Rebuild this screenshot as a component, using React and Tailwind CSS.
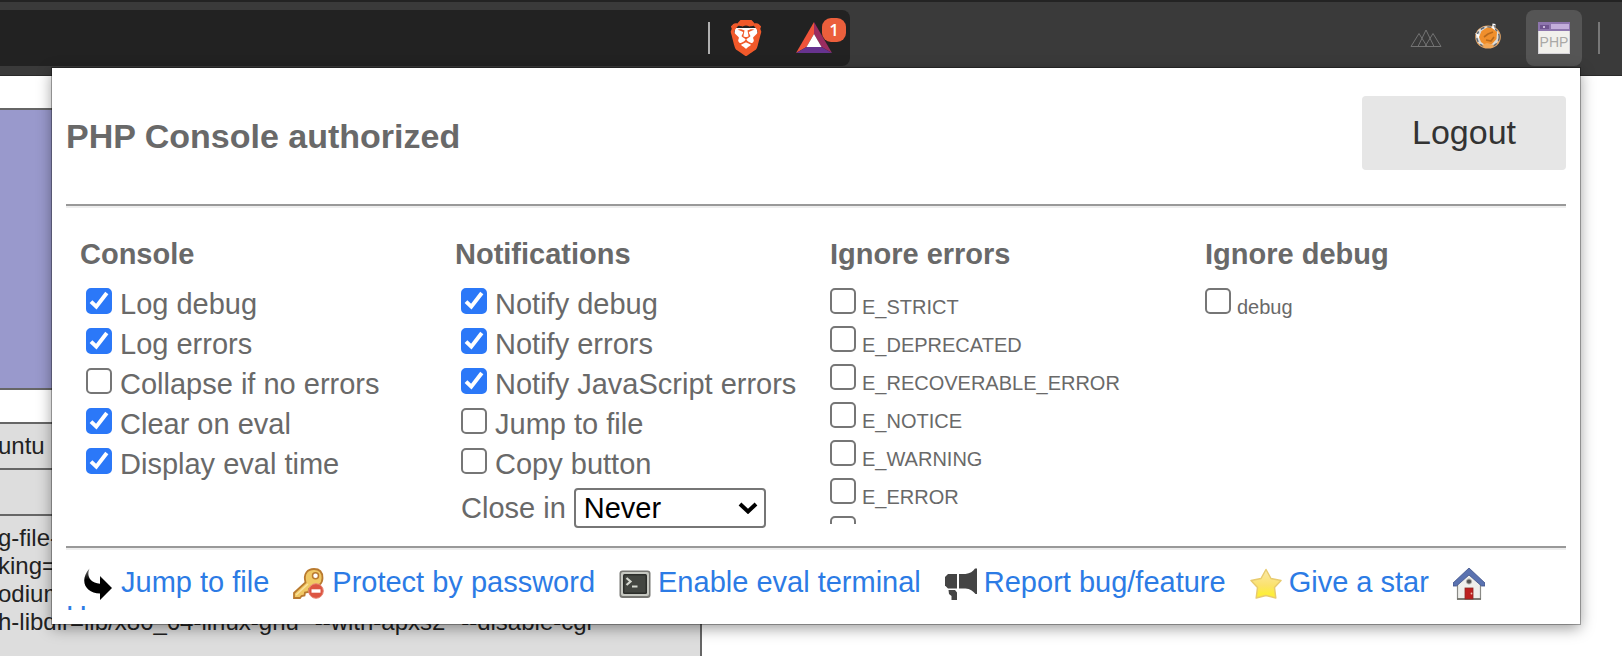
import React from "react";
import { SiBrave } from "react-icons/si";

const CONSOLE_OPTIONS = [
  ["Log debug", true],
  ["Log errors", true],
  ["Collapse if no errors", false],
  ["Clear on eval", true],
  ["Display eval time", true],
];

const NOTIFY_OPTIONS = [
  ["Notify debug", true],
  ["Notify errors", true],
  ["Notify JavaScript errors", true],
  ["Jump to file", false],
  ["Copy button", false],
];

const ERROR_TYPES = [
  "E_STRICT",
  "E_DEPRECATED",
  "E_RECOVERABLE_ERROR",
  "E_NOTICE",
  "E_WARNING",
  "E_ERROR",
  "E_PARSE",
];

function Checkbox({ defaultChecked }) {
  return (
    <span className="grid size-[26px] shrink-0">
      <input
        type="checkbox"
        defaultChecked={defaultChecked}
        className="peer col-start-1 row-start-1 size-[26px] appearance-none rounded-[5px] border-2 border-[#767676] bg-white checked:border-[#2b78f8] checked:bg-[#2b78f8]"
      />
      <svg
        viewBox="0 0 26 26"
        className="pointer-events-none invisible col-start-1 row-start-1 size-[26px] peer-checked:visible"
        fill="none"
        stroke="#fff"
        strokeWidth="4"
      >
        <path d="M5 13.6 L10.3 18.6 L20.8 5" />
      </svg>
    </span>
  );
}

function Option({ label, checked }) {
  return (
    <label className="flex h-10 items-start gap-2 leading-8 whitespace-nowrap">
      <Checkbox defaultChecked={checked} />
      {label}
    </label>
  );
}

function SmallOption({ label }) {
  return (
    <label className="flex h-[38px] items-start gap-1.5 text-[20px] leading-[38px] whitespace-nowrap">
      <Checkbox />
      {label}
    </label>
  );
}

function Column({ title, children }) {
  return (
    <section className="min-w-0 pl-3.5">
      <h2 className="pb-[18px] leading-8 font-bold whitespace-nowrap">{title}</h2>
      {children}
    </section>
  );
}

function Divider() {
  return <hr className="h-1 border-0 border-t-2 border-[#999] bg-[#eee]" />;
}

function BatIcon() {
  return (
    <svg viewBox="0 0 36 32" className="h-8 w-9">
      <path d="M18 0 L0 31 L10.5 25 L18 12 Z" fill="#f0533a" />
      <path d="M18 0 L36 31 L25.5 25 L18 12 Z" fill="#9a2c60" />
      <path d="M0 31 L36 31 L25.5 25 L10.5 25 Z" fill="#67338f" />
      <path d="M18 12 L10.5 25 L25.5 25 Z" fill="#fff" />
    </svg>
  );
}

function PeaksIcon() {
  return (
    <svg viewBox="0 0 32 19" className="h-[19px] w-8" fill="none" stroke="#737373" strokeWidth="1">
      <path d="M1 17.5 L9 4.5 L17 17.5 Z" />
      <path d="M8 17.5 L16 1 L24 17.5 Z" />
      <path d="M15 17.5 L23 4.5 L31 17.5 Z" />
    </svg>
  );
}

function FoxIcon() {
  return (
    <svg viewBox="0 0 28 26" className="h-[26px] w-7">
      <ellipse cx="14" cy="14" rx="12.8" ry="11.6" fill="#e9a866" />
      <ellipse cx="13.6" cy="13.6" rx="11.6" ry="10.4" fill="#dcdcda" />
      <ellipse cx="14" cy="14" rx="11.2" ry="10" fill="none" stroke="#5d6673" strokeWidth="1.4" strokeDasharray="4 3" />
      <path d="M1 10 L6 12 L5 16 Z" fill="#fff" />
      <path d="M18.5 0.5 L21.5 1 L21 7 L18 6 Z" fill="#fff" />
      <path d="M19.6 2 L20.6 2 L20.4 6 Z" fill="#222" />
      <path d="M5 14 L7.5 8 L13 4.5 L18 5 L23 9 L22.500 16 L18 21 L11 22 L7 19 Z" fill="#f08f2c" />
      <path d="M10 14 L14 11 L19 9 M12 17 L17 18 L20 14" stroke="#b96a1c" strokeWidth="1.6" fill="none" />
      <path d="M8 22 L13 20 L20 22 L17 25 L11 25 Z" fill="#f3a857" />
    </svg>
  );
}

function PhpIcon() {
  return (
    <svg viewBox="0 0 32 32" className="size-8">
      <rect width="32" height="32" fill="#d5d3d8" />
      <rect x="1" y="9" width="30" height="22" fill="#f1f0ec" />
      <rect width="32" height="9" fill="#8d75ad" />
      <rect x="13" y="2" width="18" height="5" fill="#c3aedb" />
      <rect x="2" y="3" width="9" height="4" fill="#6f548f" />
      <rect x="5" y="4" width="2" height="2" fill="#c9b9dc" />
      <text x="16" y="25" textAnchor="middle" fontSize="14" fontWeight="400" fill="#a9a8a6">
        PHP
      </text>
    </svg>
  );
}

function ArrowIcon() {
  return (
    <svg viewBox="0 0 32 32" className="size-8">
      <defs>
        <linearGradient id="arrow" x1="0" y1="0" x2="0" y2="1">
          <stop offset="0" stopColor="#777" />
          <stop offset="0.35" stopColor="#000" />
        </linearGradient>
      </defs>
      <path
        d="M7.500 0.500 C4.500 7 7 15 18 15.800 V8 L30 20 L18 32 V25.500 C4 25.500 -3.500 13 7.500 0.500 Z"
        fill="url(#arrow)"
      />
    </svg>
  );
}

function KeyIcon() {
  return (
    <svg viewBox="0 0 32 32" className="size-8">
      <path
        d="M1 30 L1 25 L12.500 14.500 C10 5 15 1 21 1 C27 1 29.500 5 29.500 10 C29.500 16 25 19.500 18.500 18.500 L16 21 L15.500 24 L12 24.500 L11.500 27.500 L8.500 28 L7 30 Z"
        fill="#f0c865"
        stroke="#b97a2f"
        strokeWidth="1.8"
      />
      <path d="M3 27 L15 16" stroke="#fae3a0" strokeWidth="1.500" />
      <circle cx="22.500" cy="7.800" r="3" fill="#fff" stroke="#b97a2f" strokeWidth="1.500" />
      <circle cx="23" cy="23" r="7.300" fill="#dc5542" stroke="#e98a78" strokeWidth="1" />
      <rect x="18.500" y="21.300" width="9" height="3.400" fill="#fff" />
    </svg>
  );
}

function TerminalIcon() {
  return (
    <svg viewBox="0 0 32 32" className="size-8">
      <rect x="0.500" y="2.500" width="31" height="27.500" rx="3" fill="#777773" />
      <rect x="2" y="4" width="28" height="24" rx="2" fill="#c6c8c1" />
      <rect x="4" y="6" width="24" height="20" rx="1.500" fill="#2c2e2b" />
      <rect x="5.500" y="7.500" width="21" height="17" fill="#434641" />
      <path d="M7.500 10 L11.500 13.500 L7.500 17" stroke="#d5d8d0" strokeWidth="2.200" fill="none" />
      <path d="M13 18.500 H18.500" stroke="#d5d8d0" strokeWidth="2" />
    </svg>
  );
}

function MegaphoneIcon() {
  return (
    <svg viewBox="0 0 32 32" className="size-8" fill="#444">
      <path d="M3 6 H12 V20.500 H3 L0 17.500 V9 Z" />
      <path d="M14 6 H20.500 C25 5.500 28 3.500 30 0.500 H32 V26 H30.500 C28 23 25 20.800 20.500 20.500 H14 Z" />
      <path d="M3.500 22 H10 L12 24.500 V32 H6.500 V28 L4 26 Z" />
    </svg>
  );
}

function StarIcon() {
  return (
    <svg viewBox="0 0 32 32" className="size-8">
      <defs>
        <linearGradient id="star" x1="0" y1="0" x2="0" y2="1">
          <stop offset="0" stopColor="#fbe9a8" />
          <stop offset="0.550" stopColor="#fbe26e" />
          <stop offset="0.850" stopColor="#fdee3c" />
        </linearGradient>
      </defs>
      <path
        d="M16 1.500 L21 10.500 L31 12.500 L24.500 19.500 L25.800 30 L16 27.500 L6.200 30 L7.500 19.500 L1 12.500 L11 10.500 Z"
        fill="url(#star)"
        stroke="#e8cb6e"
        strokeWidth="1.500"
        strokeLinejoin="round"
      />
    </svg>
  );
}

function HouseIcon() {
  return (
    <svg viewBox="0 0 32 32" className="size-8">
      <path d="M4.500 14 L16 4 L27.500 14 V31 H4.500 Z" fill="#efefec" stroke="#8a8a86" strokeWidth="1.200" />
      <path d="M4 31 H28" stroke="#74746c" strokeWidth="1.800" />
      <path d="M16 0 L32 15 V18 H28.500 L16 7 L3.500 18 H0 V15 Z" fill="#5a72b0" stroke="#3f5288" strokeWidth="0.800" />
      <circle cx="16" cy="13.500" r="2.600" fill="#555" stroke="#b5b5b0" strokeWidth="1" />
      <rect x="12" y="20" width="8" height="11" fill="#bd2020" stroke="#8e2a24" strokeWidth="0.800" />
      <circle cx="18.500" cy="25.500" r="0.900" fill="#f0c0b0" />
    </svg>
  );
}

const LINKS = [
  ["Jump to file", ArrowIcon],
  ["Protect by password", KeyIcon],
  ["Enable eval terminal", TerminalIcon],
  ["Report bug/feature", MegaphoneIcon],
  ["Give a star", StarIcon],
];

function BrowserBar() {
  return (
    <header className="flex h-[76px] shrink-0 items-start border-t-2 border-b border-t-[#232323] border-b-[#2a2a2a] bg-[#3a3a3a] pt-2">
      <div className="flex h-14 w-[850px] items-center justify-end rounded-r-lg bg-[#222] pr-[18px]">
        <span className="mr-[18px] h-8 w-0.5 bg-[#b0b0b0]" />
        <button aria-label="Brave Shields" className="mr-8 grid size-9 place-items-center">
          <svg viewBox="0 0 32 36" className="col-start-1 row-start-1 h-9 w-8">
            <path d="M5 8 L27 8 L28 17 L23 28 L16 32 L9 28 L4 17 Z" fill="#fff" />
          </svg>
          <SiBrave className="col-start-1 row-start-1 size-9 text-[#f1592a]" />
        </button>
        <button aria-label="Brave Rewards" className="relative">
          <BatIcon />
          <span className="absolute -top-1 -right-3.5 grid size-6 place-items-center rounded-[9px] bg-[#eb5f3c] font-['Open_Sans',sans-serif] text-[17px] leading-6 font-semibold text-white">
            1
          </span>
        </button>
      </div>
      <div className="ml-auto flex h-14 items-center pr-[22px]">
        <button aria-label="Peaks extension" className="mr-8">
          <PeaksIcon />
        </button>
        <button aria-label="Fox extension" className="mr-6 pb-1">
          <FoxIcon />
        </button>
        <button aria-label="PHP Console" className="mr-4 grid size-14 place-items-center rounded-lg bg-[#555]">
          <PhpIcon />
        </button>
        <span className="h-8 w-0.5 bg-[#777]" />
      </div>
    </header>
  );
}

function PhpInfoPage() {
  return (
    <main className="-ml-0.5 w-[704px] text-[24px] leading-7 text-[#222]">
      <div className="mt-8 h-[282px] border-2 border-[#666] bg-[#9999cc]" />
      <table className="mt-8 w-full border-separate border-spacing-0 border-t-2 border-r-2 border-[#666] bg-[#ddd] whitespace-nowrap">
        <tbody>
          <tr>
            <td className="border-b-2 border-[#666] py-2">untu</td>
          </tr>
          <tr>
            <td className="h-[46px] border-b-2 border-[#666]" />
          </tr>
          <tr>
            <td className="h-[200px] pt-2 align-top">
              g-file-
              <br />
              king=
              <br />
              odium
              <br />
              h-libdir=lib/x86_64-linux-gnu' '--with-apxs2' '--disable-cgi'
            </td>
          </tr>
        </tbody>
      </table>
    </main>
  );
}

function ConsolePopup() {
  return (
    <div className="absolute top-[68px] right-[42px] left-[52px] bg-white px-3.5 pt-7 pb-3.5 text-[29px] text-[#696969] shadow-[0_0_0_1px_rgba(0,0,0,0.3),0_4px_14px_rgba(0,0,0,0.4)]">
      <div className="mb-[34px] flex items-start justify-between">
        <h1 className="pt-5 text-[34px] leading-10 font-bold">PHP Console authorized</h1>
        <button className="h-[74px] w-[204px] rounded bg-[#e6e6e6] pb-0.5 text-[34px] text-[#333]">Logout</button>
      </div>
      <Divider />
      <div className="grid grid-cols-4 pt-[30px] pb-[22px]">
        <Column title="Console">
          <div className="pl-1.5">
            {CONSOLE_OPTIONS.map(([label, checked]) => (
              <Option key={label} label={label} checked={checked} />
            ))}
          </div>
        </Column>
        <Column title="Notifications">
          <div className="pl-1.5">
            {NOTIFY_OPTIONS.map(([label, checked]) => (
              <Option key={label} label={label} checked={checked} />
            ))}
            <div className="flex h-9 items-start gap-2 whitespace-nowrap">
              <label htmlFor="close-in" className="leading-10">
                Close in
              </label>
              <div className="grid h-10 w-48 items-center">
                <select
                  id="close-in"
                  defaultValue="Never"
                  className="col-start-1 row-start-1 h-10 w-48 appearance-none rounded border-2 border-[#767676] bg-white pl-2 leading-9 text-black"
                >
                  <option>Never</option>
                </select>
                <svg
                  viewBox="0 0 20 12"
                  className="pointer-events-none col-start-1 row-start-1 mr-2 h-3 w-5 justify-self-end"
                  fill="none"
                  stroke="#000"
                  strokeWidth="4"
                >
                  <path d="M2 2 L10 9.500 L18 2" />
                </svg>
              </div>
            </div>
          </div>
        </Column>
        <Column title="Ignore errors">
          <div className="h-[236px] overflow-hidden">
            {ERROR_TYPES.map((label) => (
              <SmallOption key={label} label={label} />
            ))}
          </div>
        </Column>
        <Column title="Ignore debug">
          <SmallOption label="debug" />
        </Column>
      </div>
      <Divider />
      <nav className="pt-[18px] text-[#2c7be5]">
        <div className="flex items-start gap-6 pl-4 leading-7 whitespace-nowrap">
          {LINKS.map(([label, Icon]) => (
            <a key={label} href="#" className="flex items-start gap-[7px]">
              <Icon />
              {label}
            </a>
          ))}
          <a href="#" aria-label="Home page">
            <HouseIcon />
          </a>
        </div>
        <div className="h-2.5 overflow-hidden leading-8">
          <a href="#">Home</a>
        </div>
      </nav>
    </div>
  );
}

export default function App() {
  return (
    <div className="relative flex h-screen flex-col overflow-hidden bg-white font-['Liberation_Sans',Arial,sans-serif]">
      <BrowserBar />
      <PhpInfoPage />
      <ConsolePopup />
    </div>
  );
}
